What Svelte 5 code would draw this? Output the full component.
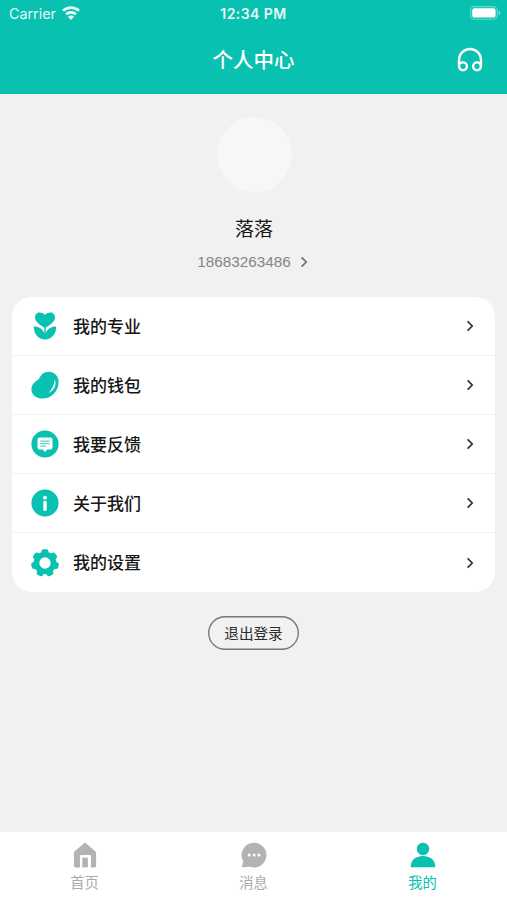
<script lang="ts">
  type MenuItem = { icon: string; label: string };

  const menu: MenuItem[] = [
    { icon: "flower", label: "我的专业" },
    { icon: "bean", label: "我的钱包" },
    { icon: "feedback", label: "我要反馈" },
    { icon: "info", label: "关于我们" },
    { icon: "gear", label: "我的设置" },
  ];

  const tabs = [
    { id: "home", label: "首页" },
    { id: "message", label: "消息" },
    { id: "mine", label: "我的" },
  ];

  let active = $state("mine");
  const user = { name: "落落", phone: "18683263486" };
  const teeth = [0, 1, 2, 3, 4, 5, 6].map((i) => (i * 360) / 7);
</script>

{#snippet chevron()}
  <svg class="chevron" viewBox="0 0 8 12">
    <path d="M1.6 1.4 6.2 6 1.6 10.6" />
  </svg>
{/snippet}

<div class="page">
  <header>
    <div class="status-bar">
      <div class="carrier">
        <span>Carrier</span>
        <svg width="18" height="14" viewBox="0 0 18 14">
          <g fill="none" stroke="#fff" stroke-width="2.7">
            <path d="M1 4.8a11.500 11.500 0 0 1 16 0" />
            <path d="M4.100 8.300a7 7 0 0 1 9.800 0" />
          </g>
          <path d="M9 13.900 5.900 10.800a4.400 4.400 0 0 1 6.200 0z" fill="#fff" />
        </svg>
      </div>
      <span class="time">12:34 PM</span>
      <svg class="battery" width="31" height="14" viewBox="0 0 31 14">
        <rect x="0.6" y="0.6" width="26.6" height="12.6" rx="3.8" fill="none" stroke="#fff" stroke-opacity="0.4" stroke-width="1.1" />
        <rect x="2.2" y="2.2" width="23.4" height="9.4" rx="2.2" fill="#fff" />
        <path d="M28.6 4.7v4.4c1-.4 1.6-1.2 1.6-2.2s-.6-1.8-1.6-2.2z" fill="#fff" fill-opacity="0.5" />
      </svg>
    </div>
    <div class="nav-bar">
      <h1>个人中心</h1>
      <svg class="headset" width="28" height="28" viewBox="0 0 28 28">
        <g fill="none" stroke="#fff" stroke-width="2.4">
          <path d="M3 20V14a11 11 0 0 1 22 0v6" />
          <circle cx="7" cy="20.300" r="3.900" />
          <circle cx="21" cy="20.300" r="3.900" />
        </g>
      </svg>
    </div>
  </header>

  <main>
    <section class="profile">
      <div class="avatar"></div>
      <div class="name">{user.name}</div>
      <div class="phone">
        <span>{user.phone}</span>
        {@render chevron()}
      </div>
    </section>

    <div class="menu">
      {#each menu as item (item.icon)}
        <div class="menu-item">
          <svg class="menu-icon" viewBox="0 0 28 28">
            {#if item.icon === "flower"}
              <path d="M14 15.900C11.200 14 4 10.500 4 5.400 4 2.600 6.100.500 8.800.500c2.200 0 4.200 1 5.200 2.500 1-1.500 3-2.500 5.200-2.500 2.700 0 4.800 2.100 4.800 4.900 0 5.100-7.200 8.600-10 10.500z" />
              <path d="M2.800 14.600c4.800-.1 9 2.500 10.500 6.900V15h1.400v6.500c1.500-4.400 5.700-7 10.500-6.900 0 7.700-4.600 12.900-11.200 12.900S2.800 22.300 2.800 14.600z" />
            {:else if item.icon === "bean"}
              <path d="M17.800.8c5.600 0 9.800 4.300 9.800 10.100 0 9.200-7.200 16.700-16.200 16.700C5 27.600.400 23.800.400 18.300c0-4 2.200-6.400 5.200-8.500C8.200 8 8.300 6.800 9.700 4.900 11.600 2.200 14.400.8 17.800.8z" />
              <path class="cut" d="M23.700 8.300c2.300 5.200-.3 11.300-6.300 13.900 3.600-3.500 5.800-8.100 6.300-13.900z" />
            {:else if item.icon === "feedback"}
              <circle cx="14" cy="14" r="13.600" />
              <path class="cut" d="M8.500 7.600h11a2 2 0 0 1 2 2v8a2 2 0 0 1-2 2h-3.300L14 22.200l-2-2.600H8.500a2 2 0 0 1-2-2v-8a2 2 0 0 1 2-2z" />
              <path class="lines" d="M9.200 11.200h9.600M9.200 13.700h9.600M9.200 16.200h5.800" />
            {:else if item.icon === "info"}
              <circle cx="14" cy="14" r="13.600" />
              <circle class="cut" cx="14" cy="8.700" r="1.900" />
              <rect class="cut" x="12.300" y="11.800" width="3.400" height="10.200" rx="1.400" />
            {:else}
              {#each teeth as angle}
                <rect x="10.500" y="0.200" width="7" height="8" rx="2.300" transform="rotate({angle} 14 14)" />
              {/each}
              <circle cx="14" cy="14" r="11.300" />
              <circle class="cut" cx="14" cy="14" r="5.700" />
            {/if}
          </svg>
          <span class="label">{item.label}</span>
          {@render chevron()}
        </div>
      {/each}
    </div>

    <button class="logout">退出登录</button>
  </main>

  <nav class="tab-bar">
    {#each tabs as tab (tab.id)}
      <button class="tab" class:active={active === tab.id} onclick={() => (active = tab.id)}>
        <svg width="28" height="28" viewBox="0 0 28 28">
          {#if tab.id === "home"}
            <path d="M13.100 2.200a1.400 1.400 0 0 1 1.800 0L24.200 10.300c.6.500.9 1.100.9 1.800v12.700a1.600 1.600 0 0 1-1.600 1.600H20V15.400a1.400 1.400 0 0 0-1.400-1.400H10.400A1.400 1.400 0 0 0 9 15.400v11H4.500a1.600 1.600 0 0 1-1.600-1.600V12.100c0-.7.3-1.300.9-1.800z" />
            <rect x="11.300" y="16.700" width="5.600" height="9.700" />
          {:else if tab.id === "message"}
            <path d="M14.100 1.700a12.400 12.400 0 1 1-4.500 24L3.300 26.300c-.8.100-1.500-.4-1.300-1.200l1.300-4.700A12.400 12.400 0 0 1 14.100 1.700z" />
            <g fill="#fff">
              <circle cx="9.200" cy="14" r="1.500" />
              <circle cx="14.100" cy="14" r="1.500" />
              <circle cx="19" cy="14" r="1.500" />
            </g>
          {:else}
            <circle cx="14" cy="8" r="6.200" />
            <path d="M1.700 25c.5-6.500 5.500-10 12.300-10s11.800 3.500 12.300 10c0 .8-.5 1.300-1.200 1.300H2.900c-.7 0-1.200-.5-1.200-1.300z" />
          {/if}
        </svg>
        <span>{tab.label}</span>
      </button>
    {/each}
  </nav>
</div>

<style>
  :global(body) {
    margin: 0;
  }

  .page {
    display: flex;
    flex-direction: column;
    width: 100%;
    height: 100vh;
    overflow: hidden;
    background: #f1f1f1;
    color: #161616;
    font-family: "Noto Sans CJK SC", sans-serif;
  }

  svg {
    display: block;
    flex-shrink: 0;
  }

  header {
    height: 94px;
    flex-shrink: 0;
    background: #08c1b1;
    color: #fff;
  }

  .status-bar,
  .nav-bar {
    display: grid;
    grid-template-columns: 1fr auto 1fr;
    align-items: center;
  }

  .status-bar {
    height: 26px;
    padding: 0 6px 0 9px;
    font-family: Inter, "Liberation Sans", sans-serif;
  }

  .carrier {
    display: flex;
    align-items: center;
    gap: 6px;
    font-size: 14.300px;
    opacity: 0.9;
  }

  .time {
    margin-right: 3px;
    font-size: 14px;
    font-weight: 600;
    letter-spacing: 0.45px;
    opacity: 0.9;
  }

  .battery {
    justify-self: end;
  }

  .nav-bar {
    height: 68px;
    padding-right: 23px;
    padding-left: 23px;
  }

  h1 {
    grid-column: 2;
    margin: 0 0 3px;
    font-size: 20.500px;
    font-weight: 500;
    line-height: 30px;
  }

  .headset {
    justify-self: end;
  }

  main {
    display: flex;
    flex: 1;
    flex-direction: column;
    align-items: center;
  }

  .profile {
    display: flex;
    flex-direction: column;
    align-items: center;
    height: 203px;
    padding-top: 23px;
    padding-left: 1px;
    box-sizing: border-box;
  }

  .avatar {
    width: 75px;
    height: 75px;
    border-radius: 50%;
    background: #f7f7f7;
  }

  .name {
    margin-top: 22px;
    font-size: 19px;
    line-height: 28px;
  }

  .phone {
    display: flex;
    align-items: center;
    gap: 9px;
    margin-top: 8px;
    margin-right: 3px;
    color: #858585;
    font-family: "Liberation Sans", sans-serif;
    font-size: 15.300px;
    line-height: 24px;
  }

  .chevron {
    width: 8px;
    height: 12px;
    fill: none;
    stroke: #333;
    stroke-width: 1.700;
  }

  .phone .chevron {
    stroke: #707070;
  }

  .menu {
    width: 483px;
    overflow: hidden;
    border-radius: 20px;
    background: #fff;
  }

  .menu-item {
    display: flex;
    align-items: center;
    height: 59.100px;
    padding: 0 21px 0 19px;
    box-sizing: border-box;
    border-bottom: 1px solid #f0f0f0;
  }

  .menu-item:last-child {
    border-bottom: none;
  }

  .menu-icon {
    width: 28px;
    height: 28px;
    fill: #08c1b1;
  }

  .cut {
    fill: #fff;
  }

  .lines {
    fill: none;
    stroke: #62d5cb;
    stroke-width: 1.200;
  }

  .label {
    flex: 1;
    margin: 0 0 2px 14px;
    font-size: 17px;
    font-weight: 500;
  }

  button {
    padding: 0;
    border: none;
    background: none;
    font-family: inherit;
  }

  .logout {
    width: 91px;
    height: 34px;
    margin-top: 24px;
    padding-bottom: 1px;
    border-radius: 17px;
    box-shadow: inset 0 0 0 1.400px #777;
    color: #2b2b2b;
    font-size: 14.600px;
  }

  .tab-bar {
    display: flex;
    height: 68px;
    flex-shrink: 0;
    background: #fff;
  }

  .tab {
    display: flex;
    flex: 1;
    flex-direction: column;
    align-items: center;
    gap: 2px;
    padding-top: 9px;
    color: #aaa;
    font-size: 14.300px;
    line-height: 22px;
  }

  .tab svg {
    fill: #b3b3b3;
  }

  .tab.active {
    color: #08c1b1;
  }

  .tab.active svg {
    fill: #08c1b1;
  }
</style>
